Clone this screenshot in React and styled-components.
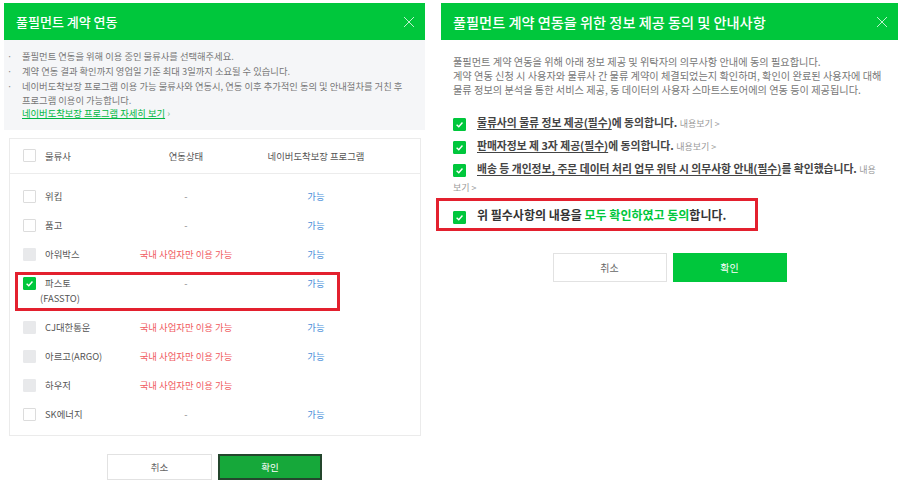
import React from "react";
import styled, { createGlobalStyle } from "styled-components";

const GlobalStyle = createGlobalStyle`
  body {
    margin: 0;
    background: #fff;
    font-family: "Noto Sans CJK KR", "Noto Sans", sans-serif;
  }
  * { box-sizing: border-box; }
`;

const carriers = [
  { name: "위킵", status: "-", program: true },
  { name: "품고", status: "-", program: true },
  { name: "아워박스", status: "domestic", program: true, disabled: true },
  { name: "파스토", sub: "(FASSTO)", status: "-", program: true, checked: true, mark: true },
  { name: "CJ대한통운", status: "domestic", program: true, disabled: true },
  { name: "아르고(ARGO)", status: "domestic", program: true, disabled: true },
  { name: "하우저", status: "domestic", program: false, disabled: true },
  { name: "SK에너지", status: "-", program: true },
];

const CheckIcon = () => (
  <svg width="9" height="9" viewBox="0 0 10 10">
    <polyline points="1.8,5.2 4.2,7.4 8.3,2.8" fill="none" stroke="#fff" strokeWidth="1.6" />
  </svg>
);

const CloseIcon = () => (
  <svg width="12" height="12" viewBox="0 0 12 12">
    <path d="M1 1 L11 11 M11 1 L1 11" stroke="rgba(255,255,255,0.75)" strokeWidth="1" fill="none" />
  </svg>
);

const Box = ({ checked, disabled }) => (
  <CheckBox $checked={checked} $disabled={disabled}>
    {checked && <CheckIcon />}
  </CheckBox>
);

const App = () => {
  return (
    <>
      <GlobalStyle />
      <Page>
        <Panel $width={421}>
          <Header>
            <Title $size={13}>풀필먼트 계약 연동</Title>
            <CloseIcon />
          </Header>
          <InfoBox>
            <Bullet>풀필먼트 연동을 위해 이용 중인 물류사를 선택해주세요.</Bullet>
            <Bullet>계약 연동 결과 확인까지 영업일 기준 최대 3일까지 소요될 수 있습니다.</Bullet>
            <Bullet>
              네이버도착보장 프로그램 이용 가능 물류사와 연동시, 연동 이후 추가적인 동의 및 안내절차를 거친 후
              프로그램 이용이 가능합니다.
            </Bullet>
            <InfoLink>
              <u>네이버도착보장 프로그램 자세히 보기</u> <Arrow>›</Arrow>
            </InfoLink>
          </InfoBox>

          <Table>
            <HeadRow>
              <Box />
              <HeadCell>물류사</HeadCell>
              <HeadCell $center>연동상태</HeadCell>
              <HeadCell $center>네이버도착보장 프로그램</HeadCell>
            </HeadRow>
            <TableBody>
              {carriers.map((c) => (
                <Row key={c.name}>
                  <Box checked={c.checked} disabled={c.disabled} />
                  <Name>
                    {c.name}
                    {c.sub && <SubName>{c.sub}</SubName>}
                  </Name>
                  {c.status === "domestic" ? (
                    <Status $red>국내 사업자만 이용 가능</Status>
                  ) : (
                    <Status>-</Status>
                  )}
                  <Program>{c.program ? "가능" : ""}</Program>
                  {c.mark && <RowMark />}
                </Row>
              ))}
            </TableBody>
          </Table>

          <Buttons $gap={6} $top={18}>
            <Button $w={105} $h={26}>취소</Button>
            <Button $w={104} $h={26} $primary $focused>확인</Button>
          </Buttons>
        </Panel>

        <Panel $width={457}>
          <Header>
            <Title $size={14.2}>풀필먼트 계약 연동을 위한 정보 제공 동의 및 안내사항</Title>
            <CloseIcon />
          </Header>
          <AgreeBody>
            <Intro>
              풀필먼트 계약 연동을 위해 아래 정보 제공 및 위탁자의 의무사항 안내에 동의 필요합니다.
              <br />
              계약 연동 신청 시 사용자와 물류사 간 물류 계약이 체결되었는지 확인하며, 확인이 완료된 사용자에 대해
              <br />
              물류 정보의 분석을 통한 서비스 제공, 동 데이터의 사용자 스마트스토어에의 연동 등이 제공됩니다.
            </Intro>
            <Items>
              <Item>
                <Box checked />
                <u>물류사의 물류 정보 제공(필수)</u>에 동의합니다. <More>내용보기 &gt;</More>
              </Item>
              <Item>
                <Box checked />
                <u>판매자정보 제 3자 제공(필수)</u>에 동의합니다. <More>내용보기 &gt;</More>
              </Item>
              <Item>
                <Box checked />
                <u>배송 등 개인정보, 주문 데이터 처리 업무 위탁 시 의무사항 안내(필수)</u>를 확인했습니다.{" "}
                <More>내용</More>
                <More>보기 &gt;</More>
              </Item>
              <AllItem>
                <Box checked />
                위 필수사항의 내용을 <Green>모두 확인하였고 동의</Green>합니다.
                <AllMark />
              </AllItem>
            </Items>
            <Buttons $gap={6} $top={28}>
              <Button $w={114} $h={29} $size={10}>취소</Button>
              <Button $w={114} $h={29} $size={10} $primary>확인</Button>
            </Buttons>
          </AgreeBody>
        </Panel>
      </Page>
    </>
  );
};

const Page = styled.div`
  display: flex;
  align-items: flex-start;
  gap: 16px;
  padding: 3px 4px;
`;

const Panel = styled.div`
  width: ${(p) => p.$width}px;
  flex: none;
  background: #fff;
`;

const Header = styled.div`
  height: 37px;
  background: #00c73c;
  display: flex;
  align-items: center;
  justify-content: space-between;
  padding: 0 10px 0 12px;
`;

const Title = styled.h2`
  margin: 0;
  color: #fff;
  font-size: ${(p) => p.$size}px;
  font-weight: 500;
`;

const InfoBox = styled.div`
  background: #f5f6f8;
  padding: 10px 14px 9px 18px;
  font-size: 9.3px;
  line-height: 13.5px;
  color: #777;
  word-break: keep-all;
`;

const Bullet = styled.div`
  position: relative;
  & + & { margin-top: 1.5px; }
  &::before {
    content: "·";
    position: absolute;
    left: -15px;
    color: #888;
  }
`;

const InfoLink = styled.div`
  color: #00b843;
  u { text-underline-offset: 1px; }
`;

const Arrow = styled.span`
  color: #7ab88c;
`;

const Table = styled.div`
  margin: 8px 4px 0 5px;
  border: 1px solid #ebebeb;
`;

const grid = `
  display: grid;
  grid-template-columns: 22px 91px 100px 160px;
  padding-left: 13px;
`;

const HeadRow = styled.div`
  ${grid}
  height: 35px;
  align-items: center;
  border-bottom: 1px solid #ececec;
`;

const HeadCell = styled.div`
  font-size: 9.4px;
  color: #555;
  text-align: ${(p) => (p.$center ? "center" : "left")};
`;

const TableBody = styled.div`
  padding: 8px 0 6px;
`;

const Row = styled.div`
  ${grid}
  position: relative;
  align-items: start;
  padding-top: 8px;
  padding-bottom: 8px;
  font-size: 9.4px;
  line-height: 13px;
`;

const RowMark = styled.span`
  position: absolute;
  left: 5px;
  top: 3px;
  width: 325px;
  height: 39px;
  border: 3px solid #e3202e;
`;

const CheckBox = styled.span`
  display: inline-flex;
  align-items: center;
  justify-content: center;
  width: 13px;
  height: 13px;
  border-radius: 1px;
  vertical-align: middle;
  background: ${(p) => (p.$checked ? "#00c73c" : p.$disabled ? "#e8e9eb" : "#fff")};
  border: 1px solid ${(p) => (p.$checked ? "#00c73c" : p.$disabled ? "#e8e9eb" : "#dcdcdc")};
`;

const Name = styled.div`
  color: #555;
`;

const SubName = styled.div`
  margin: 2px 0 0 -5px;
`;

const Status = styled.div`
  text-align: center;
  color: ${(p) => (p.$red ? "#f05a60" : "#888")};
`;

const Program = styled.div`
  text-align: center;
  color: #4a90d9;
`;

const Buttons = styled.div`
  display: flex;
  justify-content: center;
  gap: ${(p) => p.$gap}px;
  margin-top: ${(p) => p.$top}px;
`;

const Button = styled.button`
  width: ${(p) => p.$w}px;
  height: ${(p) => p.$h}px;
  font-family: inherit;
  font-size: ${(p) => p.$size || 9.5}px;
  color: ${(p) => (p.$primary ? "#fff" : "#666")};
  background: ${(p) => (p.$primary ? (p.$focused ? "#16a83a" : "#00c73c") : "#fff")};
  border: ${(p) =>
    p.$focused ? "2px solid #24462d" : p.$primary ? "1px solid #00c73c" : "1px solid #e2e2e2"};
  padding: 0;
  cursor: pointer;
`;

const AgreeBody = styled.div`
  padding: 15px 12px 0 12px;
`;

const Intro = styled.p`
  margin: 0;
  font-size: 10.2px;
  line-height: 14px;
  color: #777;
`;

const Items = styled.div`
  margin-top: 16px;
  padding-right: 6px;
`;

const Item = styled.div`
  font-size: 10.8px;
  line-height: 18px;
  font-weight: 700;
  color: #444;
  margin-bottom: 5px;
  u { text-underline-offset: 2px; }
  ${CheckBox} {
    margin: 0 11px 0 0;
    vertical-align: -2px;
  }
`;

const More = styled.span`
  font-size: 9px;
  line-height: 1;
  font-weight: 400;
  color: #999;
`;

const AllItem = styled(Item)`
  position: relative;
  font-size: 12px;
  line-height: 20px;
  color: #333;
  margin-top: 10px;
  margin-bottom: 0;
`;

const AllMark = styled.span`
  position: absolute;
  left: -17px;
  top: -7px;
  width: 322px;
  height: 33px;
  border: 3px solid #e3202e;
`;

const Green = styled.span`
  color: #00c73c;
`;

export default App;
